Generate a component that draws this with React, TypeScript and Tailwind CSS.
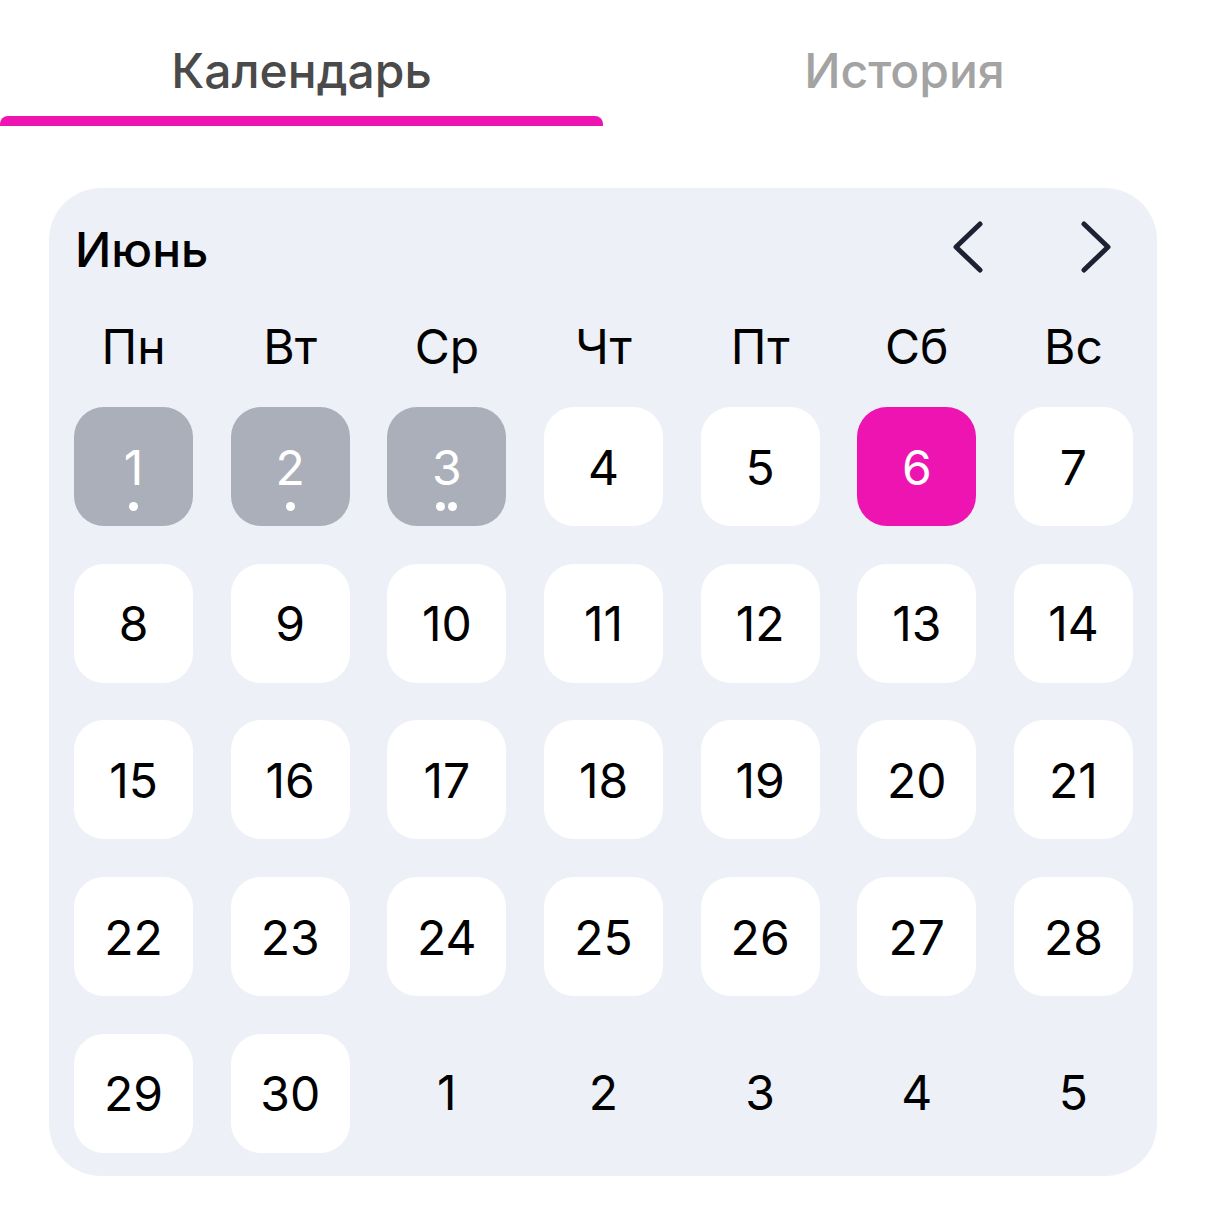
import { useState } from 'react'

type Day = {
  n: number
  muted?: boolean // outside current month
  past?: number // past day, number = dots count
  today?: boolean
}

const weekDays = ['Пн', 'Вт', 'Ср', 'Чт', 'Пт', 'Сб', 'Вс']

const days: Day[] = [
  { n: 1, past: 1 },
  { n: 2, past: 1 },
  { n: 3, past: 2 },
  ...Array.from({ length: 27 }, (_, i) => ({ n: i + 4, today: i + 4 === 6 })),
  ...[1, 2, 3, 4, 5].map((n) => ({ n, muted: true })),
]

function Chevron({ dir }: { dir: 'left' | 'right' }) {
  return (
    <svg width="32" height="54" viewBox="0 0 32 54" fill="none">
      <polyline
        points={dir === 'left' ? '28,4 4,27 28,50' : '4,4 28,27 4,50'}
        stroke="#1d2131"
        strokeWidth="5"
        strokeLinecap="round"
        strokeLinejoin="round"
      />
    </svg>
  )
}

function DayCell({ day }: { day: Day }) {
  if (day.muted) {
    return (
      <div className="aspect-square flex items-center justify-center text-[48px] text-black">
        {day.n}
      </div>
    )
  }
  const bg = day.past ? 'bg-[#abafb9] text-white' : day.today ? 'bg-[#ee14b2] text-white' : 'bg-white text-black'
  return (
    <button className={`relative aspect-square rounded-[30px] flex items-center justify-center text-[48px] pt-[2px] ${bg}`}>
      {day.n}
      {day.past ? (
        <span className="absolute bottom-[15px] left-0 right-0 flex justify-center gap-[3px]">
          {Array.from({ length: day.past }).map((_, i) => (
            <span key={i} className="w-[9px] h-[9px] rounded-full bg-white" />
          ))}
        </span>
      ) : null}
    </button>
  )
}

export default function App() {
  const [tab, setTab] = useState<'calendar' | 'history'>('calendar')

  return (
    <div className="w-[1206px] min-h-[1213px] bg-white font-['Inter',sans-serif]">
      {/* Tabs */}
      <div className="flex">
        {[
          { id: 'calendar' as const, label: 'Календарь' },
          { id: 'history' as const, label: 'История' },
        ].map((t) => (
          <button
            key={t.id}
            onClick={() => setTab(t.id)}
            className="flex-1 flex flex-col items-center pt-[37px]"
          >
            <span
              className={`text-[48px] leading-[68px] font-medium ${
                tab === t.id ? 'text-[#4a4a4a]' : 'text-[#a3a3a3]'
              }`}
            >
              {t.label}
            </span>
            <span
              className={`mt-[11px] h-[10px] w-full rounded-t-[8px] ${
                tab === t.id ? 'bg-[#ee14b2]' : 'bg-transparent'
              }`}
            />
          </button>
        ))}
      </div>

      {/* Calendar card */}
      <div className="mx-[49px] mt-[62px] rounded-[52px] bg-[#edf0f7] pl-[25px] pr-[24px] pt-[31px] pb-[23px]">
        <div className="flex items-center justify-between h-[62px]">
          <span className="text-[48px] font-medium text-black ml-[1px]">Июнь</span>
          <div className="flex items-center gap-[96px] mr-[21px] -mt-[6px]">
            <button>
              <Chevron dir="left" />
            </button>
            <button>
              <Chevron dir="right" />
            </button>
          </div>
        </div>

        <div className="grid grid-cols-7 gap-x-[37.5px] mt-[30px] h-[56px]">
          {weekDays.map((d) => (
            <div key={d} className="flex items-center justify-center text-[48px] text-black">
              {d}
            </div>
          ))}
        </div>

        <div className="grid grid-cols-7 gap-[37.5px] mt-[40px]">
          {days.map((d, i) => (
            <DayCell key={i} day={d} />
          ))}
        </div>
      </div>
    </div>
  )
}
